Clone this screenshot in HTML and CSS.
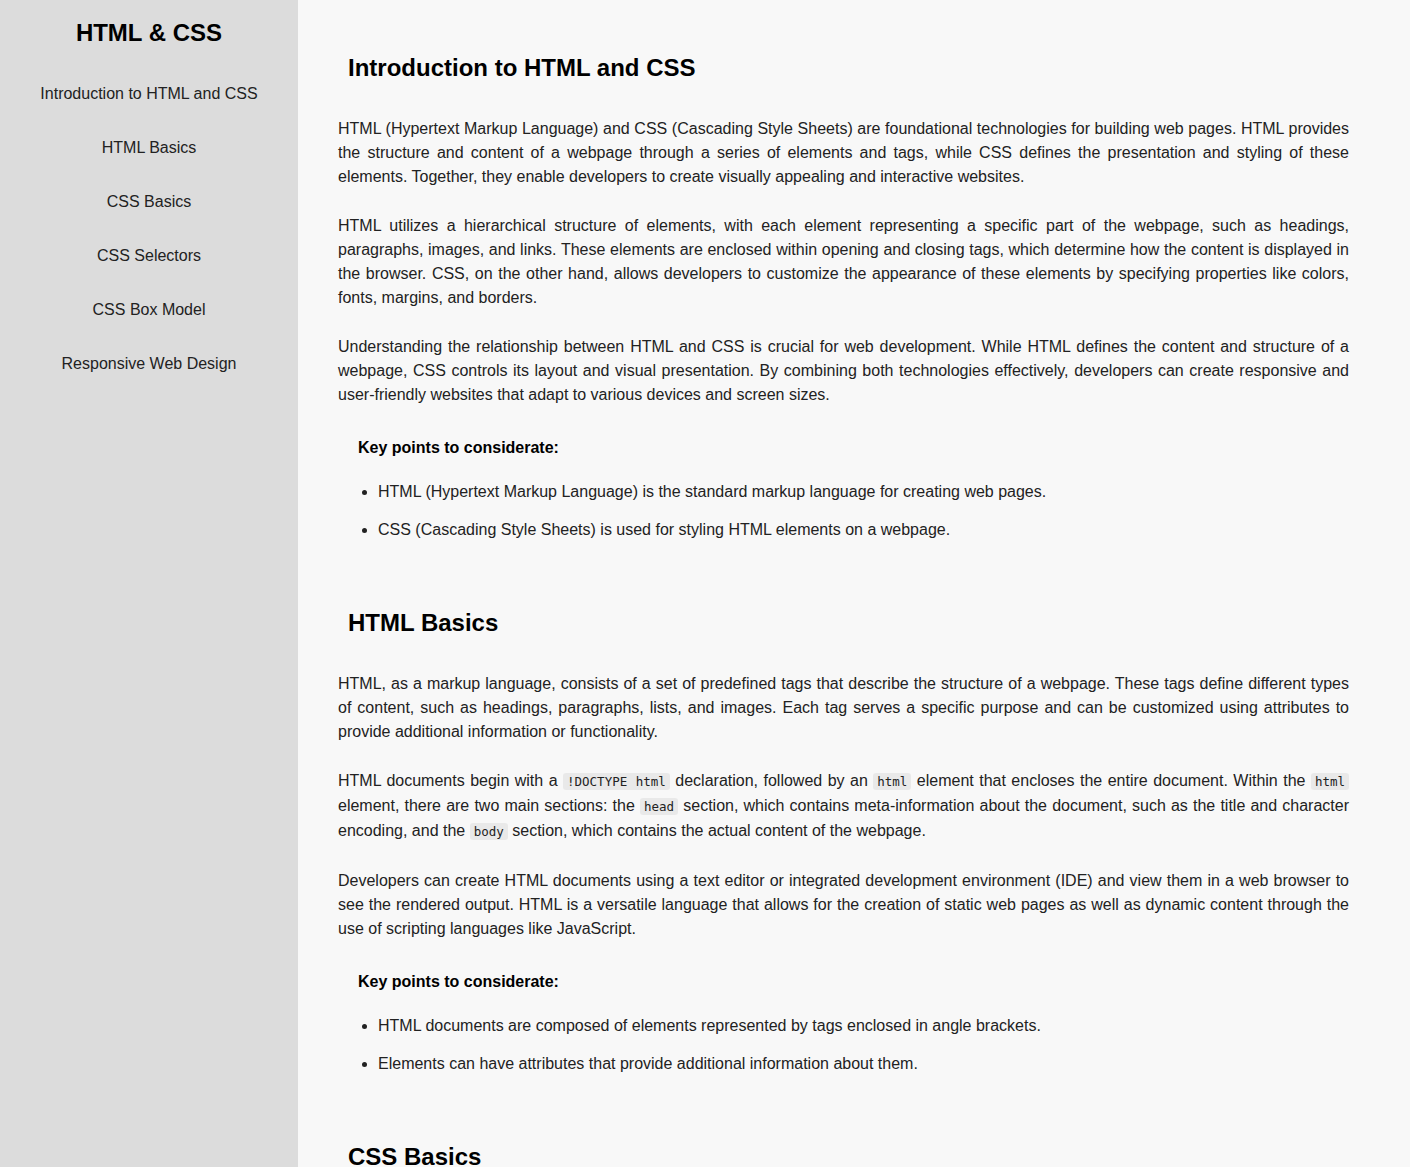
FILE: index.html
```html
<!DOCTYPE html>
<html lang="en">
<head>
<meta charset="utf-8">
<title>HTML &amp; CSS</title>
<link rel="stylesheet" href="styles.css">
</head>
<body>
<div class="layout">
  <aside class="sidebar">
    <h1 class="brand">HTML &amp; CSS</h1>
    <nav class="nav">
      <a href="#intro">Introduction to HTML and CSS</a>
      <a href="#html">HTML Basics</a>
      <a href="#css">CSS Basics</a>
      <a href="#selectors">CSS Selectors</a>
      <a href="#box">CSS Box Model</a>
      <a href="#responsive">Responsive Web Design</a>
    </nav>
  </aside>
  <main class="content">
    <section class="topic" id="intro">
      <h2>Introduction to HTML and CSS</h2>
      <p>HTML (Hypertext Markup Language) and CSS (Cascading Style Sheets) are foundational technologies for building web pages. HTML provides the structure and content of a webpage through a series of elements and tags, while CSS defines the presentation and styling of these elements. Together, they enable developers to create visually appealing and interactive websites.</p>
      <p>HTML utilizes a hierarchical structure of elements, with each element representing a specific part of the webpage, such as headings, paragraphs, images, and links. These elements are enclosed within opening and closing tags, which determine how the content is displayed in the browser. CSS, on the other hand, allows developers to customize the appearance of these elements by specifying properties like colors, fonts, margins, and borders.</p>
      <p>Understanding the relationship between HTML and CSS is crucial for web development. While HTML defines the content and structure of a webpage, CSS controls its layout and visual presentation. By combining both technologies effectively, developers can create responsive and user-friendly websites that adapt to various devices and screen sizes.</p>
      <h3>Key points to considerate:</h3>
      <ul>
        <li>HTML (Hypertext Markup Language) is the standard markup language for creating web pages.</li>
        <li>CSS (Cascading Style Sheets) is used for styling HTML elements on a webpage.</li>
      </ul>
    </section>
    <section class="topic" id="html">
      <h2>HTML Basics</h2>
      <p>HTML, as a markup language, consists of a set of predefined tags that describe the structure of a webpage. These tags define different types of content, such as headings, paragraphs, lists, and images. Each tag serves a specific purpose and can be customized using attributes to provide additional information or functionality.</p>
      <p class="codey">HTML documents begin with a <code>!DOCTYPE html</code> declaration, followed by an <code>html</code> element that encloses the entire document. Within the <code>html</code> element, there are two main sections: the <code>head</code> section, which contains meta-information about the document, such as the title and character encoding, and the <code>body</code> section, which contains the actual content of the webpage.</p>
      <p>Developers can create HTML documents using a text editor or integrated development environment (IDE) and view them in a web browser to see the rendered output. HTML is a versatile language that allows for the creation of static web pages as well as dynamic content through the use of scripting languages like JavaScript.</p>
      <h3>Key points to considerate:</h3>
      <ul>
        <li>HTML documents are composed of elements represented by tags enclosed in angle brackets.</li>
        <li>Elements can have attributes that provide additional information about them.</li>
      </ul>
    </section>
    <section class="topic" id="css">
      <h2>CSS Basics</h2>
      <p>CSS is a stylesheet language used to describe the presentation of a document written in HTML. It allows developers to control colors, fonts, spacing, layout and other visual aspects of a webpage.</p>
    </section>
  </main>
</div>
</body>
</html>
```

FILE: styles.css
```css
* { box-sizing: border-box; }

html, body {
  margin: 0;
  padding: 0;
}

body {
  font-family: "Liberation Sans", Arial, sans-serif;
  font-size: 16px;
  color: #222;
  background: #f8f8f8;
}

.layout {
  display: flex;
  align-items: stretch;
  min-height: 100vh;
}

.sidebar {
  flex: 0 0 298px;
  width: 298px;
  background: #dcdcdc;
  padding-top: 19px;
  text-align: center;
}

.brand {
  margin: 0;
  font-size: 24px;
  line-height: 28px;
  font-weight: bold;
  color: #000;
}

.nav {
  display: flex;
  flex-direction: column;
  gap: 36px;
  margin-top: 38px;
}

.nav a {
  display: block;
  color: #222;
  text-decoration: none;
  line-height: 18px;
}

.content {
  flex: 1;
  padding: 54px 61px 40px 40px;
}

.topic {
  display: flex;
  flex-direction: column;
  margin-bottom: 67px;
}

.topic h2 {
  margin: 0 0 35px;
  padding-left: 10px;
  font-size: 24px;
  line-height: 28px;
  font-weight: bold;
  color: #000;
}

.topic p {
  margin: 0 0 25px;
  line-height: 24px;
  text-align: justify;
}

.topic p.codey {
  line-height: 25px;
  margin-top: -1px;
  margin-bottom: 26px;
}

.topic h3 {
  margin: 4px 0 20px;
  padding-left: 20px;
  font-size: 16px;
  line-height: 24px;
  font-weight: bold;
  color: #000;
}

.topic ul {
  margin: 0;
  padding-left: 40px;
  display: flex;
  flex-direction: column;
  gap: 14px;
}

.topic li {
  line-height: 24px;
}

code {
  font-family: "DejaVu Sans Mono", "Liberation Mono", monospace;
  font-size: 12.5px;
  line-height: 1;
  background: #e9e9e9;
  padding: 1px 4px;
  border-radius: 3px;
  color: #222;
}
```
